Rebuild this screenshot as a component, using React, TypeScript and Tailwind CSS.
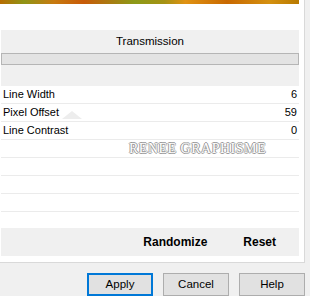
const params = [
  { label: "Line Width", value: "6" },
  { label: "Pixel Offset", value: "59" },
  { label: "Line Contrast", value: "0" },
  { label: "", value: "" },
  { label: "", value: "" },
  { label: "", value: "" },
  { label: "", value: "" },
];

export default function App() {
  return (
    <div className="w-[310px] h-[296px] bg-[#f0f0f0] overflow-hidden font-['Liberation_Sans',Arial,sans-serif] text-black">
      {/* main panel */}
      <div className="relative w-[305px] h-[263px] bg-white border-r border-b border-[#d9d9d9] flex flex-col">
        <div className="w-[299px] h-[4px] bg-[linear-gradient(90deg,#b86c00_0%,#8f9416_8%,#c77a10_18%,#c85a08_28%,#8c9a18_45%,#a59214_55%,#e09212_62%,#c86800_76%,#d49010_90%,#b87a00_100%)]" />
        <div className="h-[26px]" />

        <div className="ml-[1px] w-[298px] h-[23px] bg-[#f0f0f0] flex items-center justify-center text-[11.5px]">
          Transmission
        </div>
        <div className="ml-[1px] w-[298px] h-[12px] bg-[#e3e3e3] border border-[#b5b5b5]" />
        <div className="ml-[1px] w-[298px] h-[21px] bg-[#f0f0f0]" />

        <div className="ml-[1px] w-[298px] flex flex-col">
          {params.map((p, i) => (
            <div
              key={i}
              className="h-[18px] border-b border-[#ebebeb] flex items-center justify-between pl-[2px] pr-[2px] text-[11px]"
            >
              <span>{p.label}</span>
              <span>{p.value}</span>
            </div>
          ))}
        </div>

        <div className="h-[16px]" />
        <div className="ml-[1px] w-[298px] h-[28px] bg-[#f0f0f0] flex items-center justify-end gap-[36px] pr-[23px] text-[12px] font-bold">
          <span>Randomize</span>
          <span>Reset</span>
        </div>

        {/* watermark over the list */}
        <svg className="absolute left-[62px] top-[111px]" width="20" height="8" viewBox="0 0 20 8">
          <polygon points="0,8 10,0 20,8" fill="#ededed" />
        </svg>
        <div className="absolute left-[129px] top-[141px] font-['Liberation_Serif',serif] text-[14px] leading-[16px] tracking-[0.5px] text-white [text-shadow:1px_0_#9a9a9a,-1px_0_#9a9a9a,0_1px_#9a9a9a,0_-1px_#9a9a9a]">
          RENEE GRAPHISME
        </div>
      </div>

      {/* dialog buttons */}
      <div className="mt-[10px] pl-[87px] flex gap-[10px] text-[11.5px]">
        <button className="w-[66px] h-[23px] bg-[#e1e1e1] border-2 border-[#0078d7] flex items-center justify-center">
          Apply
        </button>
        <button className="w-[66px] h-[23px] bg-[#e1e1e1] border border-[#adadad] flex items-center justify-center">
          Cancel
        </button>
        <button className="w-[66px] h-[23px] bg-[#e1e1e1] border border-[#adadad] flex items-center justify-center">
          Help
        </button>
      </div>
    </div>
  );
}
